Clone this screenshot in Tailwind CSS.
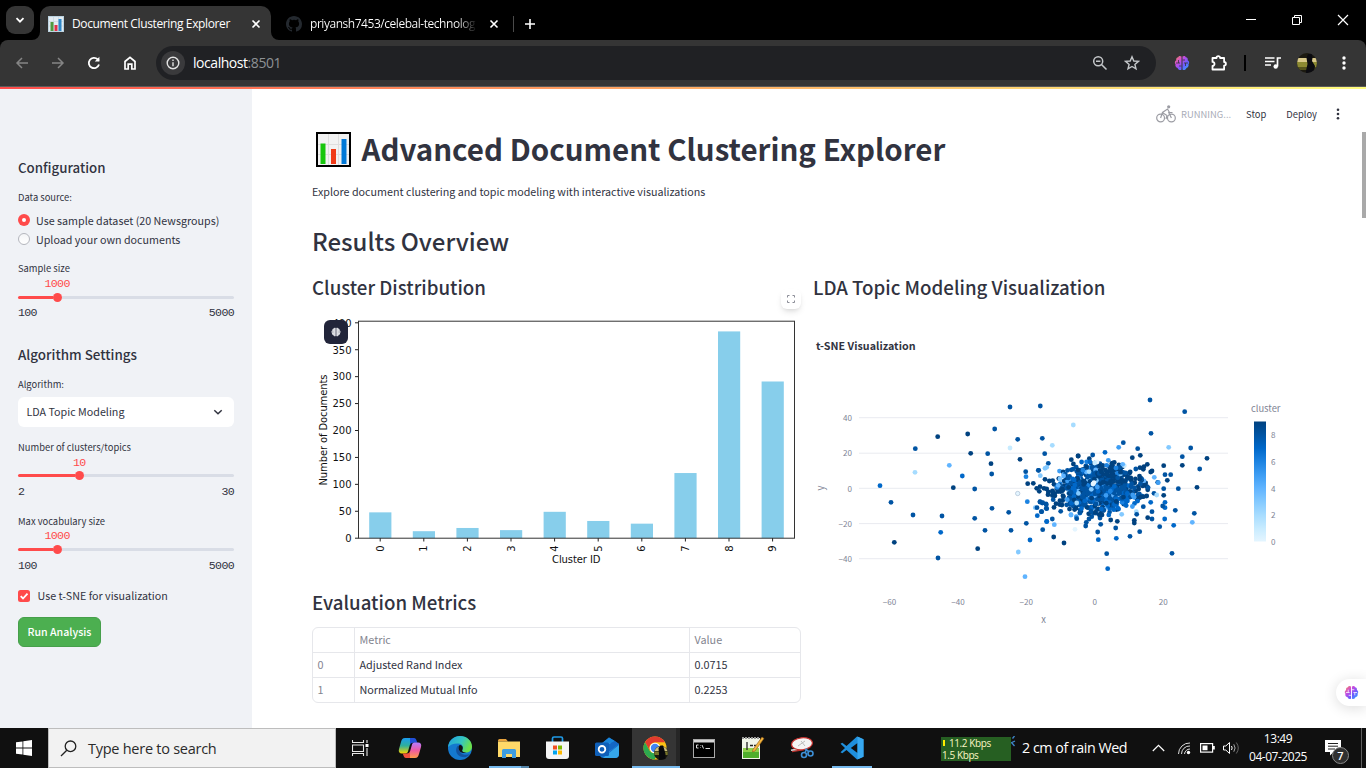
<!DOCTYPE html>
<html lang="en">
<head>
<meta charset="utf-8">
<title>Document Clustering Explorer</title>
<script src="https://cdn.jsdelivr.net/npm/@tailwindcss/browser@4"></script>
</head>
<body class="w-[1366px] h-[768px] overflow-hidden flex flex-col bg-white font-['Noto_Sans_CJK_SC','Open_Sans',sans-serif] text-[#31333F]">

<!-- shared brain symbol -->
<svg class="absolute w-0 h-0">
  <defs>
    <linearGradient id="bg1" x1="0" y1="0" x2="1" y2="1"><stop offset="0" stop-color="#ff8a4c"/><stop offset=".35" stop-color="#c84be0"/><stop offset=".65" stop-color="#6a5cff"/><stop offset="1" stop-color="#28b4ff"/></linearGradient>
    <symbol id="brain" viewBox="0 0 16 16">
      <path d="M7.500 1.600C6.400.7 4.600.8 4.200 2.300 2.600 2.500 1.800 3.900 2.300 5.200.7 6 .4 8.100 1.500 9.300 1 11 1.900 12.600 3.600 12.900 4.200 14.900 6.400 15.600 7.500 14.400zM8.500 1.600C9.600.7 11.400.8 11.800 2.300 13.400 2.500 14.200 3.900 13.700 5.200 15.300 6 15.600 8.100 14.500 9.300 15 11 14.100 12.600 12.400 12.900 11.800 14.900 9.600 15.600 8.500 14.400z"/>
    </symbol>
  </defs>
</svg>

<!-- tab strip -->
<div class="h-10 shrink-0 bg-black flex items-end font-['Open_Sans',sans-serif] text-white">
  <div class="w-[28px] h-[28px] ml-[6px] mb-[6px] rounded-[9px] bg-[#353535] flex items-center justify-center">
    <svg width="10" height="10" viewBox="0 0 10 10" fill="none" stroke="#fff" stroke-width="1.8"><path d="M1.500 3.200 5 6.700 8.500 3.200"/></svg>
  </div>
  <svg class="ml-[-2px]" width="8" height="34" viewBox="0 0 8 34"><path d="M0 34a8 8 0 0 0 8-8v8z" fill="#353535"/></svg>
  <div class="h-[34px] w-[231px] rounded-t-[10px] bg-[#353535] flex items-center pl-[8px] pb-[6px] pt-[7px]">
    <svg width="16" height="16" viewBox="0 0 16 16"><rect x=".5" y=".5" width="15" height="15" fill="#e3ecf2" stroke="#bcd3e0"/><path d="M1 5.500h14M1 10h14M5.500 1v14M10.500 1v14" stroke="#c5d6e0" stroke-width=".7"/><rect x="2.500" y="6" width="3" height="9" fill="#4f9a3f"/><rect x="6.500" y="9" width="3" height="6" fill="#e0304a"/><rect x="10.500" y="3" width="3" height="12" fill="#2f87c8"/></svg>
    <div class="ml-2 text-[12px] tracking-[-0.37px] leading-4 whitespace-nowrap w-[172px]">Document Clustering Explorer</div>
    <svg class="ml-[7px]" width="10" height="10" viewBox="0 0 10 10" stroke="#fff" stroke-width="1.600"><path d="M1.500 1.500l7 7M8.500 1.500l-7 7"/></svg>
  </div>
  <svg width="8" height="34" viewBox="0 0 8 34"><path d="M0 26a8 8 0 0 0 8 8H0z" fill="#353535"/></svg>
  <div class="h-[34px] flex items-center pl-[7px] pb-[6px] pt-[7px]">
    <svg width="16" height="16" viewBox="0 0 16 16" fill="#24292f"><path d="M8 0C3.580 0 0 3.580 0 8c0 3.540 2.290 6.530 5.470 7.590.4.070.55-.17.55-.38 0-.19-.01-.82-.01-1.490-2.010.37-2.530-.49-2.690-.94-.09-.23-.48-.94-.82-1.130-.28-.15-.68-.52-.01-.53.63-.01 1.080.58 1.230.82.72 1.210 1.870.87 2.330.66.07-.52.28-.87.51-1.070-1.780-.2-3.640-.89-3.640-3.950 0-.87.31-1.590.82-2.150-.08-.2-.36-1.020.08-2.120 0 0 .67-.21 2.200.82a7.600 7.600 0 0 1 4 0c1.530-1.040 2.200-.82 2.200-.82.44 1.100.16 1.920.08 2.120.51.56.82 1.270.82 2.150 0 3.070-1.870 3.750-3.650 3.950.29.25.54.73.54 1.480 0 1.070-.01 1.930-.01 2.200 0 .21.15.46.55.38A8 8 0 0 0 16 8c0-4.420-3.580-8-8-8z"/></svg>
    <div class="ml-2 text-[12px] tracking-[-0.46px] leading-4 whitespace-nowrap w-[167px] overflow-hidden bg-linear-to-r from-white from-88% to-transparent bg-clip-text text-transparent">priyansh7453/celebal-technolog</div>
    <svg class="ml-[12px]" width="10" height="10" viewBox="0 0 10 10" stroke="#fff" stroke-width="1.600"><path d="M1.500 1.500l7 7M8.500 1.500l-7 7"/></svg>
    <div class="ml-[14px] w-px h-4 bg-[#4a4a4a]"></div>
    <svg class="ml-[10px]" width="12" height="12" viewBox="0 0 12 12" stroke="#fff" stroke-width="1.600"><path d="M6 1v10M1 6h10"/></svg>
  </div>
  <div class="ml-auto h-10 flex items-center pr-[17px] gap-[34px]">
    <svg width="12" height="12" viewBox="0 0 12 12" stroke="#fff" stroke-width="1"><path d="M1 5.500h10"/></svg>
    <svg width="12" height="12" viewBox="0 0 12 12" fill="none" stroke="#fff" stroke-width="1"><path d="M1.500 3.500h7v7h-7zM3.500 3.500v-2h7v7h-2"/></svg>
    <svg width="12" height="12" viewBox="0 0 12 12" stroke="#fff" stroke-width="1.200"><path d="M1 1l10 10M11 1 1 11"/></svg>
  </div>
</div>

<!-- toolbar -->
<div class="bg-black shrink-0">
<div class="h-[46px] bg-[#353535] rounded-t-lg flex items-center font-['Open_Sans',sans-serif]">
  <svg class="ml-[14px]" width="16" height="16" viewBox="0 0 16 16" fill="none" stroke="#858585" stroke-width="1.500"><path d="M14 8H3M8 3 3 8l5 5"/></svg>
  <svg class="ml-[20px]" width="16" height="16" viewBox="0 0 16 16" fill="none" stroke="#858585" stroke-width="1.500"><path d="M2 8h11M8 3l5 5-5 5"/></svg>
  <svg class="ml-[20px]" width="16" height="16" viewBox="0 0 16 16" fill="none" stroke="#fff" stroke-width="1.800"><path d="M13 9.500A5.200 5.200 0 1 1 11.700 4.300L13 5.600"/><path d="M13.400 1.800v4.600H8.800z" fill="#fff" stroke="none"/></svg>
  <svg class="ml-[20px]" width="16" height="16" viewBox="0 0 16 16" fill="none" stroke="#fff" stroke-width="1.700"><path d="M3 14V6.500L8 2.300l5 4.200V14H9.800V9.200H6.200V14z"/></svg>
  <div class="ml-[18px] w-[1000px] h-[34px] rounded-full bg-[#202124] flex items-center pl-[5px] pr-[16px]">
    <div class="w-6 h-6 rounded-full bg-[#3a3a3c] flex items-center justify-center">
      <svg width="14" height="14" viewBox="0 0 14 14" fill="none" stroke="#e3e3e3" stroke-width="1.400"><circle cx="7" cy="7" r="5.800"/><path d="M7 6.300v3.900M7 3.600v1.500"/></svg>
    </div>
    <div class="ml-[8px] text-[14px] leading-5 tracking-[-0.45px] text-[#8e9195]"><span class="text-white">localhost</span>:8501</div>
    <svg class="ml-auto" width="16" height="16" viewBox="0 0 16 16" fill="none" stroke="#c4c7ca" stroke-width="1.500"><circle cx="6.200" cy="6.200" r="4.500"/><path d="M9.500 9.500l5 5M4 6.200h4.400"/></svg>
    <svg class="ml-[16px]" width="16" height="16" viewBox="0 0 16 16" fill="none" stroke="#c4c7ca" stroke-width="1.400"><path d="M8 1.800 9.800 6l4.600.4-3.500 3 1.100 4.500L8 11.500l-4 2.400 1.100-4.500-3.500-3L6.200 6z"/></svg>
  </div>
  <svg class="ml-[18px]" width="16" height="16" viewBox="0 0 16 16"><use href="#brain" width="16" height="16" fill="url(#bg1)"/><path d="M2 8h4M4.500 5v3M5 11h2.500M14 8h-4M11.500 11V8M11 5H8.500" fill="none" stroke="#353535" stroke-width=".8"/></svg>
  <svg class="ml-[20px]" width="18" height="18" viewBox="0 0 18 18" fill="none" stroke="#fff" stroke-width="1.800" stroke-linejoin="round"><path d="M2.500 4h4a1.800 1.800 0 0 1 3.600 0h4v4a1.800 1.800 0 0 1 0 3.600V15.500H2.500v-3.600a2 2 0 0 0 0-4z"/></svg>
  <div class="ml-[16px] w-[2px] h-4 bg-black"></div>
  <svg class="ml-[18px]" width="18" height="16" viewBox="0 0 18 16" fill="none" stroke="#fff" stroke-width="1.700"><path d="M1 3h9.500M1 6.500h9.500M1 10h6M13.500 11.500V3H17"/><circle cx="11.700" cy="11.500" r="2.200" fill="#fff" stroke="none"/></svg>
  <svg class="ml-[15px]" width="20" height="20" viewBox="0 0 20 20"><defs><clipPath id="av"><circle cx="10" cy="10" r="10"/></clipPath></defs><g clip-path="url(#av)"><rect width="20" height="20" fill="#1c1a10"/><rect y="5" width="20" height="4" fill="#d9c98a"/><rect y="9" width="20" height="5" fill="#8d8a32"/><rect y="14" width="20" height="3" fill="#55531c"/><path d="M9 20c0-4 1-6 1.500-9L9.500 5l1.500-4h4l.5 4-.5 3 3 5-1 7z" fill="#0b0b10"/></g></svg>
  <svg class="ml-[23px]" width="8" height="16" viewBox="0 0 8 16" fill="#fff"><circle cx="4" cy="3" r="1.700"/><circle cx="4" cy="8" r="1.700"/><circle cx="4" cy="13" r="1.700"/></svg>
</div>
<div class="h-px bg-[#5a5a5a]"></div>
<div class="h-[2px] bg-linear-to-r from-[#ff4b4b] to-[#fffd80]"></div>
</div>

<!-- app -->
<div class="h-[639px] shrink-0 flex relative">
  <!-- sidebar -->
  <aside class="w-[252px] shrink-0 bg-[#f0f2f6] pl-[18px] pr-[18px] pt-[69px] flex flex-col text-[10.72px] whitespace-nowrap">
    <h2 class="h-5 leading-5 text-[13.3px] font-medium">Configuration</h2>
    <div class="mt-[11px] h-4 leading-4 text-[9.4px]">Data source:</div>
    <div class="mt-[8px] h-4 flex items-center leading-4"><div class="w-3 h-3 mt-[-2px] rounded-full bg-[#ff4b4b] flex items-center justify-center"><div class="w-1 h-1 rounded-full bg-white"></div></div><span class="ml-[6px]">Use sample dataset (20 Newsgroups)</span></div>
    <div class="mt-[3px] h-4 flex items-center leading-4"><div class="w-3 h-3 mt-[-2px] rounded-full bg-linear-to-b from-[#f4f5f7] to-white border border-[#b4b6bd]"></div><span class="ml-[6px]">Upload your own documents</span></div>

    <div class="mt-[12px] h-4 leading-4 text-[9.4px]">Sample size</div>
    <div class="h-[14px] leading-[15px] text-[#ff4b4b] pl-[26.5px] text-[11.6px] tracking-[-0.66px] font-['Liberation_Mono',monospace]">1000</div>
    <div class="mt-[-1px] h-4 flex items-center"><div class="h-[3px] w-[35px] rounded-l bg-[#ff4b4b]"></div><div class="w-[9px] h-[9px] rounded-full bg-[#ff4b4b]"></div><div class="h-[3px] flex-1 rounded-r bg-[#d9dde6]"></div></div>
    <div class="h-4 mt-[-1px] leading-[17px] flex justify-between text-[11.6px] tracking-[-0.66px] font-['Liberation_Mono',monospace]"><span>100</span><span>5000</span></div>

    <h2 class="mt-[24px] h-5 leading-5 text-[13.4px] font-medium">Algorithm Settings</h2>
    <div class="mt-[12px] h-4 leading-4 text-[9.4px]">Algorithm:</div>
    <div class="mt-[5px] h-[30px] rounded-md bg-white flex items-center justify-between pl-[8.5px] pr-[11px]"><span class="leading-4">LDA Topic Modeling</span>
      <svg width="10" height="10" viewBox="0 0 10 10" fill="none" stroke="#31333F" stroke-width="1.500"><path d="M1.300 3.200 5 6.800 8.700 3.200"/></svg></div>

    <div class="mt-[12px] h-4 leading-4 text-[9.4px]">Number of clusters/topics</div>
    <div class="h-[14px] leading-[15px] text-[#ff4b4b] pl-[55px] text-[11.6px] tracking-[-0.66px] font-['Liberation_Mono',monospace]">10</div>
    <div class="mt-[-2px] mb-px h-4 flex items-center"><div class="h-[3px] w-[57px] rounded-l bg-[#ff4b4b]"></div><div class="w-[9px] h-[9px] rounded-full bg-[#ff4b4b]"></div><div class="h-[3px] flex-1 rounded-r bg-[#d9dde6]"></div></div>
    <div class="mt-[-1px] h-4 leading-[17px] flex justify-between text-[11.6px] tracking-[-0.66px] font-['Liberation_Mono',monospace]"><span>2</span><span>30</span></div>

    <div class="mt-[15px] h-[14px] leading-[14px] text-[9.4px]">Max vocabulary size</div>
    <div class="h-[14px] leading-[15px] text-[#ff4b4b] pl-[26.5px] text-[11.6px] tracking-[-0.66px] font-['Liberation_Mono',monospace]">1000</div>
    <div class="mt-[-1px] h-4 flex items-center"><div class="h-[3px] w-[35px] rounded-l bg-[#ff4b4b]"></div><div class="w-[9px] h-[9px] rounded-full bg-[#ff4b4b]"></div><div class="h-[3px] flex-1 rounded-r bg-[#d9dde6]"></div></div>
    <div class="h-4 leading-[17px] flex justify-between text-[11.6px] tracking-[-0.66px] font-['Liberation_Mono',monospace]"><span>100</span><span>5000</span></div>

    <div class="mt-[15px] h-4 flex items-center leading-4"><svg width="12" height="12" viewBox="0 0 12 12"><rect width="12" height="12" rx="2.500" fill="#ff4b4b"/><path d="M2.700 6.200 5 8.500 9.500 3.600" fill="none" stroke="#fff" stroke-width="1.800"/></svg><span class="ml-[7.5px]">Use t-SNE for visualization</span></div>
    <div class="mt-[13px] w-[83px] h-[30px] rounded-md bg-[#4CAF50] border border-[#469f4b] text-white flex items-center justify-center font-medium text-[10.6px]">Run Analysis</div>
  </aside>

  <!-- main -->
  <main class="flex-1 pl-[60px] flex flex-col whitespace-nowrap">
    <div class="h-[41px] pt-[14px] flex justify-end pr-[25px] items-start text-[9.4px]">
      <div class="h-[22px] flex items-center">
        <svg width="20" height="18" viewBox="0 0 20 18" fill="none" stroke="#9b9ca3" stroke-width="1.200"><circle cx="4.600" cy="13" r="3.900"/><circle cx="15.400" cy="13" r="3.900"/><path d="M4.600 13 6.500 7.500 11.500 4l2 3.500h3M7 8l4 2.500-1 3.500M15.400 13 12.500 7"/><circle cx="12.700" cy="1.800" r="1.600" fill="#9b9ca3" stroke="none"/></svg>
        <span class="ml-[5px] leading-4 text-[#a9acb8]">RUNNING...</span>
        <span class="ml-[15px] leading-4">Stop</span>
        <span class="ml-[20px] leading-4">Deploy</span>
        <svg class="ml-[18px]" width="6" height="12" viewBox="0 0 6 12" fill="#31333F"><circle cx="3" cy="1.800" r="1.300"/><circle cx="3" cy="6" r="1.300"/><circle cx="3" cy="10.200" r="1.300"/></svg>
      </div>
    </div>
    <div class="h-10 flex items-start">
      <svg class="ml-[4px] mt-[2px]" width="35" height="35" viewBox="0 0 35 35"><rect x="1" y="1" width="33" height="33" fill="#f2f2f2" stroke="#000" stroke-width="2"/><path d="M12.500 2v31M22.500 2v31M2 12.500h31M2 22.500h31" stroke="#dedede"/><rect x="4.500" y="11.500" width="5" height="20.500" fill="#16c60c"/><rect x="15" y="17" width="5" height="15" fill="#f03a17"/><rect x="25.500" y="7" width="5" height="25" fill="#0078d7"/></svg>
      <h1 class="ml-[10.5px] text-[29.52px] leading-[38px] font-bold">Advanced Document Clustering Explorer</h1>
    </div>
    <p class="mt-[12px] h-5 leading-5 text-[10.74px]">Explore document clustering and topic modeling with interactive visualizations</p>
    <h2 class="mt-[21px] mb-px h-9 leading-9 text-[24px] font-medium">Results Overview</h2>
    <div class="flex mt-[14px]">
      <section class="w-[501px]">
        <h3 class="h-7 leading-[26px] text-[18.7px] font-medium">Cluster Distribution</h3>
        <svg id="bar" class="block" width="489" height="276" viewBox="312 302 489 276" font-family="DejaVu Sans" font-size="10" fill="#111"></svg>
        <h3 class="mt-[11px] h-7 leading-[26px] text-[18.7px] font-medium">Evaluation Metrics</h3>
        <div class="mt-[10px] w-[489px] border border-[#e6e7eb] rounded-md text-[10.8px] leading-[22px] grid grid-cols-[42px_335px_1fr]">
          <div class="h-[25px] border-b border-r border-[#e6e7eb]"></div><div class="h-[25px] border-b border-r border-[#e6e7eb] pl-[4.5px] text-[#83858f]">Metric</div><div class="h-[25px] border-b border-[#e6e7eb] pl-[4.5px] text-[#83858f]">Value</div>
          <div class="h-[25px] border-b border-r border-[#e6e7eb] pl-[4.5px] text-[#83858f]">0</div><div class="h-[25px] border-b border-r border-[#e6e7eb] pl-[4.5px]">Adjusted Rand Index</div><div class="h-[25px] border-b border-[#e6e7eb] pl-[4.5px]">0.0715</div>
          <div class="h-[24px] border-r border-[#e6e7eb] pl-[4.5px] text-[#83858f]">1</div><div class="h-[24px] border-r border-[#e6e7eb] pl-[4.5px]">Normalized Mutual Info</div><div class="h-[24px] pl-[4.5px]">0.2253</div>
        </div>
      </section>
      <section>
        <h3 class="h-7 leading-[26px] text-[18.7px] font-medium">LDA Topic Modeling Visualization</h3>
        <svg id="sc" class="block" width="500" height="340" viewBox="813 302 500 340" font-size="8.100" fill="#808495"></svg>
      </section>
    </div>
  </main>

  <!-- floating controls over the page -->
  <div class="absolute left-[781px] top-[200px] w-[20px] h-[20px] rounded-md bg-white shadow-md flex items-center justify-center">
    <svg width="8" height="8" viewBox="0 0 8 8" fill="none" stroke="#8a8c96" stroke-width="1"><path d="M.5 2.500v-2h2M5.500.5h2v2M7.500 5.500v2h-2M2.500 7.500h-2v-2"/></svg>
  </div>
  <div class="absolute left-[324px] top-[231px] w-[24px] h-[24px] rounded-[6px] bg-[#22253a] flex items-center justify-center">
    <svg width="10" height="10" viewBox="0 0 16 16" fill="#dcdde2"><use href="#brain" width="16" height="16"/><path d="M0 8h4M12 8h4" stroke="#8f919c" stroke-width="1.200"/></svg>
  </div>
  <div class="absolute left-[1362px] top-[43px] w-[4px] h-[86px] bg-[#a9a9a9]"></div>
  <div class="absolute left-[1336px] top-[590px] w-[30px] h-[27px] rounded-l-full bg-white shadow-[0_2px_14px_rgba(0,0,0,0.14)] flex items-center pl-[8px]">
    <svg width="15" height="15" viewBox="0 0 16 16"><use href="#brain" width="16" height="16" fill="url(#bg1)"/><path d="M2 8h4M4.500 5v3M5 11h2.500M14 8h-4M11.500 11V8M11 5H8.500" fill="none" stroke="#fff" stroke-width=".8"/></svg>
  </div>
</div>

<!-- taskbar -->
<div class="h-10 shrink-0 bg-[#101010] flex items-stretch text-white font-['Open_Sans',sans-serif] relative">
  <div class="w-12 flex items-center justify-center"><svg width="16" height="16" viewBox="0 0 16 16" fill="#fff"><path d="M0 2.300 6.500 1.400v6.200H0zM7.300 1.300 16 0v7.600H7.300zM0 8.400h6.500v6.200L0 13.700zM7.300 8.400H16V16l-8.700-1.300z"/></svg></div>
  <div class="w-[288px] bg-[#f2f2f2] border border-[#bdbdbd] flex items-center pl-[11px]">
    <svg width="17" height="17" viewBox="0 0 17 17" fill="none" stroke="#222" stroke-width="1.300"><circle cx="10.500" cy="6.300" r="5.300"/><path d="M6.800 10.200 1 16"/></svg>
    <span class="ml-[11px] mt-px text-[14.5px] leading-5 tracking-[-0.26px] text-[#2b2b2b]">Type here to search</span>
  </div>
  <div class="w-[49px] flex items-center justify-center"><svg width="17" height="16" viewBox="0 0 17 16" fill="none" stroke="#e8e8e8" stroke-width="1.100"><path d="M.5 0v2.500h11V0M.5 5h11v6.500H.5zM.5 16v-2.500h11V16M15 0v3M15 8v8"/><path d="M13.500 4h3v3h-3z" fill="#fff" stroke="none"/></svg></div>
  <div class="w-[50px] flex items-center justify-center"><svg width="24" height="22" viewBox="0 0 24 22"><defs><linearGradient id="cp1" x1="0" y1="0" x2="0" y2="1"><stop offset="0" stop-color="#1a9cf0"/><stop offset=".5" stop-color="#2fb09a"/><stop offset="1" stop-color="#f7d400"/></linearGradient><linearGradient id="cp2" x1="0" y1="0" x2="0" y2="1"><stop offset="0" stop-color="#b67bff"/><stop offset=".5" stop-color="#ef5aa2"/><stop offset="1" stop-color="#ff9b4a"/></linearGradient></defs><path d="M15 1H7C4.500 1 3.800 2.500 3 5L1 12c-.8 2.800.4 4.500 3 4.500h3.500c1.600 0 2.200-1 2.700-2.700L13 4c.5-1.800 1-3 2-3z" fill="url(#cp1)"/><path d="M12 1h4c1.500 0 2 1 2.500 2.500l.8 2.300h-4c-2 0-2.800.8-3.300 2.200z" fill="#2150d8"/><path d="M9 21h8c2.500 0 3.200-1.500 4-4l2-7c.8-2.800-.4-4.500-3-4.500h-3.500c-1.600 0-2.200 1-2.700 2.700L11 18c-.5 1.800-1 3-2 3z" fill="url(#cp2)"/><path d="M12 21H8c-1.500 0-2-1-2.500-2.500l-.8-2h4c2 0 2.800-.8 3.300-2.200z" fill="#f0503c"/></svg></div>
  <div class="w-[49px] flex items-center justify-center"><svg width="24" height="24" viewBox="0 0 24 24"><defs><linearGradient id="e1" x1="0" y1="0" x2="1" y2=".4"><stop offset="0" stop-color="#1f9fe0"/><stop offset=".6" stop-color="#35c6c0"/><stop offset="1" stop-color="#6be04a"/></linearGradient></defs><circle cx="12" cy="12" r="12" fill="#1479cf"/><path d="M0 11C1 4 6 0 12 0c7 0 12 5 12 10.500 0 4-3 6-6 6-3.500 0-4.500-1.500-3.500-3 1-2 .5-5.500-4-6C6 7 2 9 0 11z" fill="url(#e1)"/><path d="M9.500 10c-3 4-1 10 5 11 3 .5 6-.5 7.500-3-3 1.500-8 1-10-2-1.200-2-1.500-4-.5-6.500z" fill="#1253a0"/><path d="M11.500 9c2.500 0 4 2 3 4.500-1 1.500 0 3 3.500 3-1.500 1-4.500.5-6-1-1.500-2-1.800-4.500-.5-6.500z" fill="#101010"/></svg></div>
  <div class="w-[49px] flex items-center justify-center relative"><svg width="22" height="19" viewBox="0 0 22 19"><path d="M0 1.500Q0 0 1.500 0H8l2 2.500H0z" fill="#e8a33d"/><path d="M0 2.500h22V18H0z" fill="#ffd968"/><path d="M4 19v-7.500Q4 10 5.500 10h11q1.500 0 1.500 1.500V19h-4v-4H8v4z" fill="#3e9de0"/></svg><div class="absolute bottom-0 left-[5px] w-[32px] h-[2px] bg-[#76b9ed]"></div><div class="absolute bottom-0 left-[37px] w-[8px] h-[2px] bg-[#5484a8]"></div></div>
  <div class="w-[49px] flex items-center justify-center"><svg width="23" height="24" viewBox="0 0 23 24"><path d="M6.500 6V2.500Q6.500 1 8 1h7q1.500 0 1.500 1.500V6" fill="none" stroke="#1f9be8" stroke-width="1.700"/><path d="M0 5.500h23V20q0 3-3 3H3q-3 0-3-3z" fill="#f5f5f5"/><path d="M7 9.500h4v4H7z" fill="#f25022"/><path d="M12 9.500h4v4h-4z" fill="#7fba00"/><path d="M7 14.500h4v4H7z" fill="#00a4ef"/><path d="M12 14.500h4v4h-4z" fill="#ffb900"/></svg></div>
  <div class="w-[50px] flex items-center justify-center"><svg width="24" height="22" viewBox="0 0 24 22"><path d="M5 8 14 .5 24 7v10q0 4-4 4H9q-4 0-4-3z" fill="#1473cc"/><path d="M14 6l8 2-8 7z" fill="#9ed8f8"/><path d="M24 8v9q0 4-4 4H8l6-5z" fill="#35a6ea"/><path d="M6 7l8-6.500L20 4 10 9z" fill="#1a86dc"/><path d="M14 7 20 4l4 3-10 8z" fill="#1467c4"/><rect y="5.500" width="14" height="13.500" rx="1.500" fill="#0f5fb8"/><circle cx="7" cy="12.300" r="3.300" fill="none" stroke="#fff" stroke-width="1.800"/></svg></div>
  <div class="w-[48px] bg-[#353535] flex items-center justify-center relative"><svg width="26" height="24" viewBox="0 0 26 24"><circle cx="12" cy="12" r="11.500" fill="#fbc116"/><path d="M2 6.200A11.500 11.500 0 0 1 22 6.200H12a6 6 0 0 0-5.500 8z" fill="#e33b2e"/><path d="M2 6.200A11.500 11.500 0 0 0 11.500 23.500l4.800-8.500a6 6 0 0 1-9.500 0z" fill="#2da94f"/><circle cx="12" cy="12" r="5.300" fill="#fff"/><circle cx="12" cy="12" r="4.200" fill="#4285f4"/><circle cx="18" cy="17" r="7" fill="#1b1a0d"/><path d="M11.500 15a7 7 0 0 1 13 0z" fill="#cdbf7c"/><path d="M11.300 15.500h13.400v3.500H11.500z" fill="#77742a"/><path d="M16 24v-6l-.5-6 2-2.500h2.500l1 3 1.500 5.500v5z" fill="#08080c"/></svg><div class="absolute top-0 right-0 w-[4px] h-10 bg-[#262626]"></div><div class="absolute bottom-0 left-0 w-[48px] h-[2px] bg-[#76b9ed]"></div></div>
  <div class="w-[48px] flex items-center justify-center"><svg width="22" height="19" viewBox="0 0 22 19"><rect x=".5" y=".5" width="21" height="18" fill="#000" stroke="#a9a9a9"/><path d="M1 1h20v2.500H1z" fill="#d6d6d6"/><path d="M5.500 6h-2v3h2M7.500 6.500v.5M7.500 8.500v.5M9 6l1.500 3.500M12.500 9.500H17" fill="none" stroke="#ddd" stroke-width="1"/></svg></div>
  <div class="w-[49px] flex items-center justify-center"><svg width="24" height="24" viewBox="0 0 24 24"><path d="M1 2h18v21H1z" fill="#f1f5e8"/><path d="M2 12h16v9H2z" fill="#8fd14a"/><path d="M2 16h16v6H2z" fill="#4fae2c"/><path d="M1 2h18" stroke="#999" stroke-dasharray="2 1" stroke-width="2"/><path d="M6 6v8M9 9.500h3M13 9.500h2" stroke="#222" stroke-width="1.300"/><path d="M21 1l2 1.500L14 15l-2.500 1 .5-2.500z" fill="#f3b43d" stroke="#8b5a1c" stroke-width=".6"/></svg></div>
  <div class="w-[50px] flex items-center justify-center"><svg width="24" height="22" viewBox="0 0 24 22"><path d="M2 14.500l12-2" stroke="#b9302c" stroke-width="1.500"/><path d="M1 13.200l13-2" stroke="#ddd" stroke-width="1.500"/><ellipse cx="12" cy="6.800" rx="10.500" ry="6" fill="#f4f4f4" stroke="#c8322f" stroke-width="1.200" transform="rotate(-6 12 6.800)"/><path d="M8 9l7-5M11 4l4 5" stroke="#bbb"/><circle cx="14" cy="18" r="2.500" fill="none" stroke="#3d8fd6" stroke-width="1.600"/><circle cx="20.500" cy="16.500" r="2.500" fill="none" stroke="#3d8fd6" stroke-width="1.600"/><path d="M15 15.500l2-4M19 14.500l-4-2" stroke="#3d8fd6" stroke-width="1.500"/></svg></div>
  <div class="w-[49px] flex items-center justify-center relative"><svg width="24" height="24" viewBox="0 0 24 24"><path d="M17 .5 6.500 10 2.300 6.800.5 7.700 5 12 .5 16.300l1.800.9L6.500 14 17 23.500l6.500-2.700V3.200zM17.500 7v10l-6.700-5z" fill="#1f8fdc" fill-rule="evenodd"/><path d="M17.500.5l6 2.700v17.600l-6 2.700z" fill="#37a8f0"/></svg><div class="absolute bottom-0 left-[5px] w-[40px] h-[2px] bg-[#76b9ed]"></div></div>

  <div class="ml-[65px] mt-[9px] w-[70px] h-[24px] bg-[#265f22] text-[10px] leading-[12px] tracking-[-0.42px] pl-[1px] whitespace-nowrap text-[#fbf6c4]"><div class="flex items-center gap-[4px]"><span class="w-[2px] h-[6px] ml-px bg-[#ffee00]"></span>11.2 Kbps</div><div>1.5 Kbps</div></div>
  <svg class="mt-[8px]" width="5" height="14" viewBox="0 0 5 14" stroke="#3f86c9" stroke-width="1.300"><path d="M3.500 0 1.500 2.500M4 5 0 7M1 7l2.500 3"/></svg>
  <div class="ml-[6px] w-[106px] flex items-center text-[14.300px] leading-5 tracking-[-0.48px] whitespace-nowrap">2 cm of rain Wed</div>
  <div class="ml-[24px] flex items-center">
    <svg width="13" height="8" viewBox="0 0 13 8" fill="none" stroke="#fff" stroke-width="1.200"><path d="M.8 7 6.500 1.300 12.200 7"/></svg>
    <svg class="ml-[12px]" width="14" height="14" viewBox="0 0 14 14" fill="none" stroke="#ddd" stroke-width="1"><path d="M1.500 13A11 11 0 0 1 13 2M4.500 13A8 8 0 0 1 13 5M7.500 13A5.500 5.500 0 0 1 13 8"/><circle cx="11.500" cy="11.500" r="1.700" fill="#fff" stroke="none"/></svg>
    <svg class="ml-[9px]" width="15" height="10" viewBox="0 0 15 10"><rect x=".6" y=".6" width="12" height="8.500" fill="none" stroke="#fff" stroke-width="1.200"/><path d="M2.500 2.500h5v4.700h-5zM13 3h1.800v3.500H13z" fill="#fff"/></svg>
    <svg class="ml-[8px]" width="17" height="14" viewBox="0 0 17 14" fill="none" stroke="#fff" stroke-width="1"><path d="M.5 5h2.300L6.500 1.500v11L2.800 9H.5zM8.500 5q1.300 2 0 4"/><path d="M10.800 3.300q2.600 3.700 0 7.400" stroke="#aaa"/><path d="M13.300 1.500q4 5.500 0 11" stroke="#666"/></svg>
  </div>
  <div class="absolute left-[1243px] top-0 w-[70px] pt-[2px] text-center text-[12px] leading-[18px] tracking-[-0.46px]"><div>13:49</div><div>04-07-2025</div></div>
  <svg class="absolute left-[1325px] top-[11px]" width="26" height="26" viewBox="0 0 26 26"><path d="M0 1h16v12H8.500L5 16.500V13H0z" fill="#fff"/><path d="M3 4.500h10M3 7.200h10M3 10h7" stroke="#222" stroke-width="1"/><circle cx="15.500" cy="16.500" r="8" fill="#303030" stroke="#8a8a8a" stroke-width="1"/><text x="15.500" y="20.500" font-size="11" fill="#fff" text-anchor="middle" font-family="Open Sans" font-weight="600">7</text></svg>
  <div class="absolute left-[1361px] top-0 w-px h-10 bg-[#5f5f5f]"></div>
</div>

<script>
// Bar chart
const bar = document.getElementById('bar');
let h = '';
const counts = [48, 13, 19, 15, 49, 32, 27, 121, 384, 291];
counts.forEach((v, i) => {
  const cx = 380.2 + i * 43.6, y = 538.2 - v * 0.5385;
  h += `<rect x="${cx - 11}" y="${y}" width="22.200" height="${538.2 - y}" fill="#87ceeb"/>`;
  h += `<path d="M${cx} 538v3.500" stroke="#222"/><text transform="translate(${cx + 3.6} 551.800) rotate(-90)" textLength="6">${i}</text>`;
});
for (let v = 0; v <= 400; v += 50) {
  const y = 538.2 - v * 0.5385;
  h += `<path d="M355 ${y}h3.500" stroke="#222"/><text x="351.500" y="${y + 3.8}" text-anchor="end">${v}</text>`;
}
h += `<rect x="358.500" y="321.200" width="436" height="217" fill="none" stroke="#333" stroke-width="1"/>`;
h += `<text x="552" y="562.800" textLength="48.500">Cluster ID</text><text transform="translate(326.500 485.500) rotate(-90)" textLength="111">Number of Documents</text>`;
bar.innerHTML = h;

// t-SNE scatter
const C = ['#e4f5ff','#c7ebff','#a6dcff','#83c9ff','#60b4ff','#3d9df3','#1c83e1','#0068c9','#0054a3','#004280'];
const left = [[600,111,8],[691,108,8],[790,165,2],[727,226,2],[697,205,8],[554,177,8],[473,192,9],[383,200,9],[316,236,8],[315,307,2],[418,286,4],[457,318,7],[430,353,9],[494,357,8],[482,250,9],[533,251,8],[543,281,9],[545,312,8],[630,268,9],[623,208,8],[600,234,1],[210,347,7],[243,397,8],[309,435,8],[396,438,8],[392,487,7],[253,517,9],[384,564,8],[494,445,8],[546,415,8],[596,427,8],[525,481,8],[603,481,8],[503,536,9],[660,510,7],[625,546,3],[645,620,4],[649,460,8],[652,395,6],[647,305,8],[648,320,6],[704,251,8],[698,479,8],[731,501,9],[762,519,9],[795,478,0],[733,464,4],[863,486,8],[865,509,7],[890,551,8],[893,596,7],[710,455,7],[682,437,7],[676,413,3],[681,413,8],[690,396,8],[697,399,8],[709,404,8],[709,415,8],[694,425,8],[653,341,9],[670,340,9],[686,301,8],[691,317,3],[805,258,9],[783,435,4],[799,440,5]];
const right = [[390,60,8],[494,95,8],[393,160,8],[310,188,8],[353,206,8],[296,202,5],[446,202,3],[512,204,8],[487,230,8],[561,235,9],[431,257,9],[487,256,9],[539,267,8],[531,322,9],[475,326,8],[431,326,8],[431,346,9],[442,301,9],[435,284,8],[452,284,8],[396,273,9],[392,276,9],[403,292,4],[413,307,8],[415,308,5],[402,340,8],[410,345,2],[466,391,8],[523,400,8],[517,427,4],[461,436,7],[419,440,8],[434,417,7],[396,417,8],[383,413,9],[359,455,8],[330,469,8],[287,444,8],[289,475,7],[456,520,8],[361,226,9],[337,233,9],[255,217,7],[218,225,8],[174,228,9],[154,239,9],[208,236,9],[435,367,7],[435,383,7],[428,378,8],[392,367,7],[370,380,8],[396,395,8],[85,250,8],[55,271,8],[349,395,2],[350,403,8],[343,421,9],[343,429,9],[292,424,9],[272,420,9],[242,433,8],[240,414,8],[122,394,8],[153,404,4],[97,417,8],[80,424,7],[360,263,9],[372,260,9],[382,253,9],[370,268,9],[363,295,9],[372,310,9],[381,320,9],[377,309,9],[380,348,9],[356,327,9],[50,325,9],[60,320,9],[72,325,9],[80,327,9],[58,334,9],[75,298,9],[88,303,9],[98,302,9],[102,313,9],[85,336,9],[98,345,9],[84,344,9],[65,395,8],[60,365,8],[68,368,8],[78,372,8],[80,386,8],[102,382,9],[108,371,9],[197,438,8],[199,427,8],[170,416,8],[215,410,8],[220,400,8],[207,417,8]];
const front = [[75,265,3],[80,262,3],[120,297,3],[115,316,4],[163,360,9],[170,369,2],[222,308,0],[219,312,0],[232,321,5],[214,328,3],[231,246,0],[224,249,1],[313,257,1],[308,253,4],[207,275,2],[265,241,5],[260,256,6],[288,264,6],[258,346,5],[225,378,9],[338,345,5],[342,352,5],[305,403,3],[228,372,8]];
let seed = 77;
const rnd = () => (seed = (seed * 16807) % 2147483647) / 2147483647;
const gauss = () => Math.sqrt(-2 * Math.log(rnd() + 1e-9)) * Math.cos(6.28318 * rnd());
let s = '';
[[417.7, '40'], [453.2, '20'], [488.3, '0'], [523.6, '−20'], [558.700, '−40']].forEach(([y, t]) => {
  s += `<path d="M859 ${y}h369" stroke="#e9ebf0"/><text x="852" y="${y + 3.2}" text-anchor="end">${t}</text>`;
});
[[889.5, '−60'], [958, '−40'], [1026.2, '−20'], [1094.8, '0'], [1163.2, '20']].forEach(([x, t]) => {
  s += `<text x="${x}" y="604.800" text-anchor="middle">${t}</text>`;
});
const dot = (x, y, c) => { s += `<circle cx="${x.toFixed(1)}" cy="${y.toFixed(1)}" r="2.400" fill="${C[c]}"/>`; };
left.forEach(([x, y, c]) => dot(810 + x / 3, 370 + y / 3, c));
right.forEach(([x, y, c]) => dot(1020 + x / 3, 380 + y / 3, c));
let n = 0;
while (n < 740) {
  const gx = gauss(), gy = gauss();
  if (gx * gx + gy * gy > 5) continue;
  const x = 236 + gx * 68, y = 324 + gy * 38;
  const k = rnd();
  let c = k < .015 ? 4 : k < .03 ? 3 : k < .05 ? 5 : k < .08 ? 6 : k < .24 ? 7 : k < .78 ? 8 : 9;
  if (c > 6 && ((x > 235 && y < 312) || x < 135 || x > 345)) c = k < .28 ? 8 : 9;
  if (c > 7 && y > 345 && x > 240 && k < .55) c = 7;
  dot(1020 + x / 3, 380 + y / 3, c);
  n++;
}
front.forEach(([x, y, c]) => dot(1020 + x / 3, 380 + y / 3, c));
s += `<circle cx="1017.700" cy="493.500" r="2.200" fill="#e4f5ff" stroke="#9fb6cc" stroke-width=".6"/>`;
s += `<text x="816" y="350" font-size="10.700" font-weight="700" fill="#31333F" textLength="99.500">t-SNE Visualization</text>`;
s += `<text x="1251" y="411.800" font-size="9.400" textLength="29.500">cluster</text><text x="1041.200" y="623.300" font-size="9.400">x</text><text transform="translate(823.500 490.500) rotate(-90)" font-size="9.400">y</text>`;
s += `<defs><linearGradient id="cb" x1="0" y1="0" x2="0" y2="1">` + C.slice().reverse().map((c, i) => `<stop offset="${i / 9}" stop-color="${c}"/>`).join('') + `</linearGradient></defs><rect x="1254" y="421.500" width="12" height="120" fill="url(#cb)"/>`;
[[541.7, 0], [515.2, 2], [489, 4], [462, 6], [435.2, 8]].forEach(([y, t]) => { s += `<text x="1271" y="${y + 3}">${t}</text>`; });
document.getElementById('sc').innerHTML = s;
</script>
</body>
</html>
